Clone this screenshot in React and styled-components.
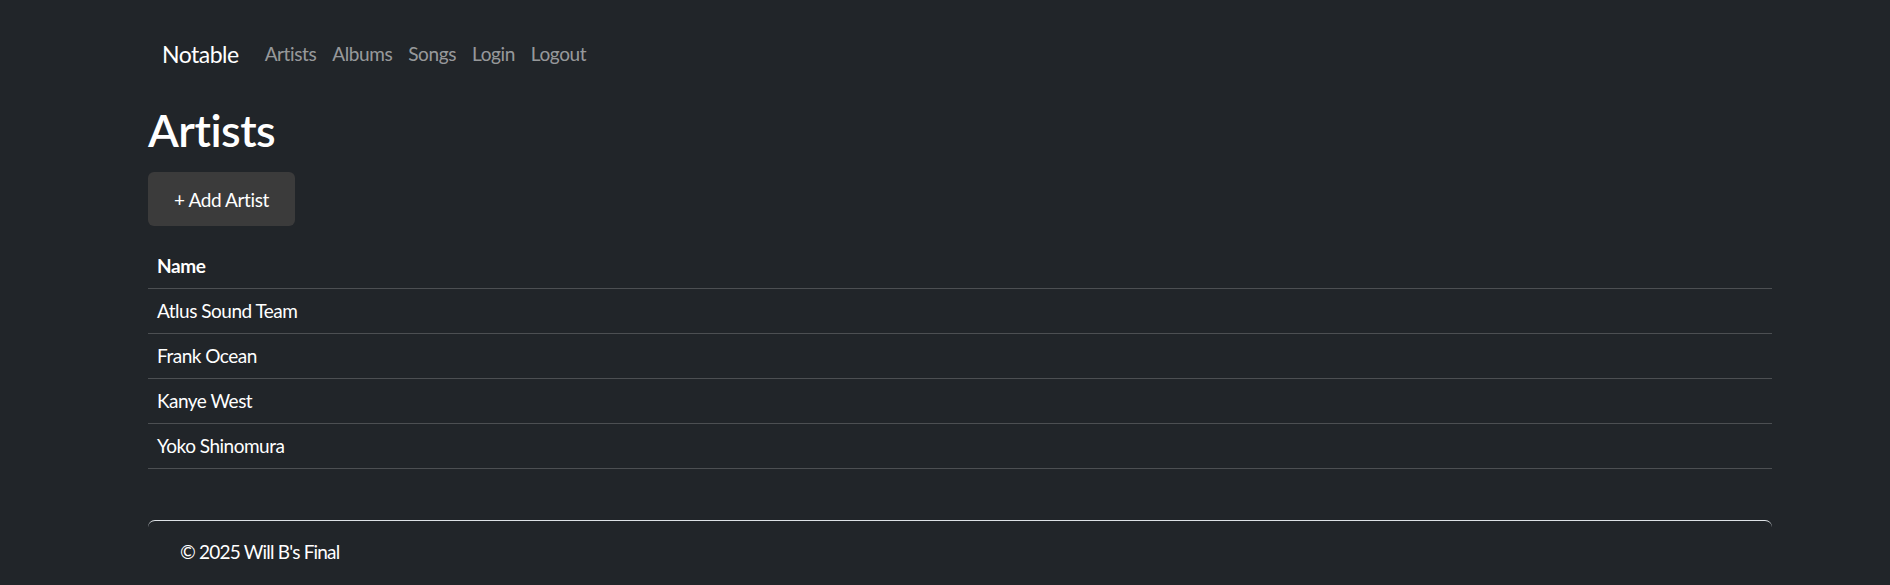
import React from 'react';
import styled, { createGlobalStyle } from 'styled-components';

const GlobalStyle = createGlobalStyle`
  html, body {
    margin: 0;
    padding: 0;
    background: #212529;
  }
  body {
    font-family: Lato, "Open Sans", sans-serif;
    color: #ffffff;
    font-size: 19px;
    letter-spacing: -0.4px;
    line-height: 30px;
  }
`;

const Page = styled.div`
  width: 1890px;
  height: 585px;
  overflow: hidden;
  background: #212529;
`;

const Container = styled.div`
  width: 1624px;
  margin-left: 148px;
`;

const Navbar = styled.nav`
  display: flex;
  align-items: center;
  gap: 16px;
  padding: 30px 0 0 14px;
  height: 48px;
`;

const Brand = styled.a`
  font-size: 23px;
  letter-spacing: -0.5px;
  color: #ffffff;
  text-decoration: none;
  margin-right: 10px;
`;

const NavLink = styled.a`
  color: rgba(255, 255, 255, 0.55);
  text-decoration: none;
`;

const Title = styled.h1`
  margin: 23px 0 13px;
  font-size: 45px;
  letter-spacing: -0.5px;
  font-weight: 600;
  line-height: 58px;
`;

const AddButton = styled.button`
  display: block;
  width: 147px;
  height: 54px;
  border: none;
  border-radius: 6px;
  background: #3b3b3b;
  color: #ffffff;
  font-family: inherit;
  font-size: 19px;
  letter-spacing: -0.4px;
`;

const Table = styled.table`
  width: 100%;
  margin-top: 18px;
  border-collapse: collapse;
`;

const Th = styled.th`
  text-align: left;
  font-weight: 700;
  padding: 7px 9px;
  border-bottom: 1px solid #4c4f52;
`;

const Td = styled.td`
  padding: 7px 9px;
  border-bottom: 1px solid #4c4f52;
  letter-spacing: -0.5px;
`;

const Footer = styled.footer`
  margin-top: 51px;
  border-top: 1px solid #dee2e6;
  border-radius: 7px 7px 0 0;
  padding: 16px 32px;
  letter-spacing: -0.8px;
`;

const artists = ['Atlus Sound Team', 'Frank Ocean', 'Kanye West', 'Yoko Shinomura'];
const links = ['Artists', 'Albums', 'Songs', 'Login', 'Logout'];

export default function App() {
  return (
    <Page>
      <GlobalStyle />
      <Container>
        <Navbar>
          <Brand href="#">Notable</Brand>
          {links.map((l) => (
            <NavLink key={l} href="#">{l}</NavLink>
          ))}
        </Navbar>
        <Title>Artists</Title>
        <AddButton>+ Add Artist</AddButton>
        <Table>
          <thead>
            <tr>
              <Th>Name</Th>
            </tr>
          </thead>
          <tbody>
            {artists.map((a) => (
              <tr key={a}>
                <Td>{a}</Td>
              </tr>
            ))}
          </tbody>
        </Table>
        <Footer>© 2025 Will B's Final</Footer>
      </Container>
    </Page>
  );
}
